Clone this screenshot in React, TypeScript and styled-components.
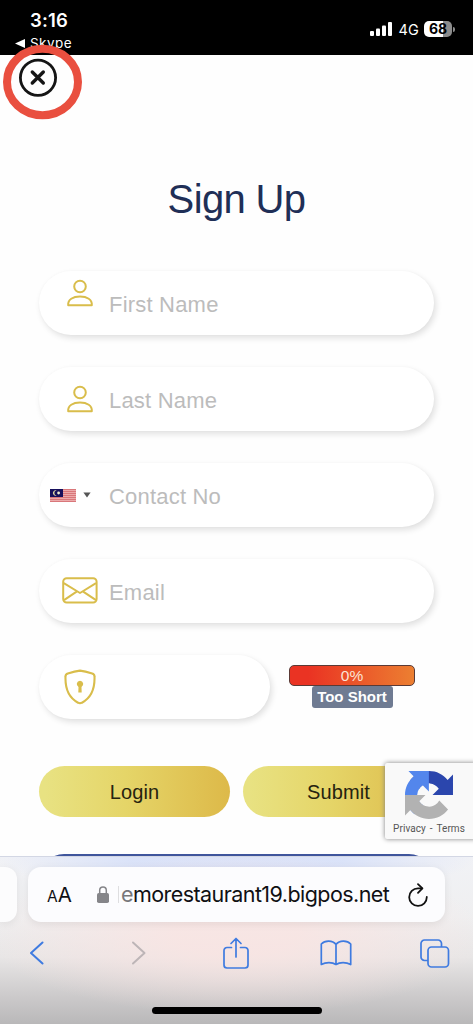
import React from "react";
import styled, { createGlobalStyle } from "styled-components";

const GlobalStyle = createGlobalStyle`
  * { box-sizing: border-box; }
  body { margin: 0; background: #fefefe; }
  button { border: 0; padding: 0; background: none; font: inherit; color: inherit; }
  svg { display: block; flex: none; }
`;

const Screen = styled.div`
  position: relative;
  width: 473px;
  height: 1024px;
  overflow: hidden;
  display: flex;
  flex-direction: column;
  background: #fefefe;
  font-family: "Liberation Sans", Arial, sans-serif;
`;

const StatusBar = styled.header`
  height: 55px;
  flex: none;
  display: flex;
  justify-content: space-between;
  background: #000;
  color: #fff;
  font-family: Inter, sans-serif;
`;

const ClockColumn = styled.div`
  padding: 9px 0 0 15px;
`;

const Clock = styled.div`
  padding-left: 15px;
  font-size: 18.5px;
  line-height: 22px;
  font-weight: 600;
  letter-spacing: 0.15px;
`;

const BackToApp = styled.div`
  display: flex;
  align-items: center;
  gap: 5px;
  margin-top: 4px;
  font-size: 13.5px;
  line-height: 17px;
  letter-spacing: 0.45px;
`;

const Indicators = styled.div`
  display: flex;
  align-items: center;
  height: 22px;
  margin: 18px 18px 0 0;
`;

const Network = styled.span`
  margin: 0 5px 0 6px;
  font-size: 14.5px;
  letter-spacing: 0.2px;
`;

const Battery = styled.span`
  width: 28px;
  height: 16px;
  border-radius: 5px;
  background: linear-gradient(90deg, #fff 68%, #8c8c8c 68%);
  color: #000;
  font-size: 14px;
  line-height: 16px;
  font-weight: 700;
  text-align: center;
`;

const BatteryTip = styled.span`
  width: 2px;
  height: 5px;
  margin-left: 1px;
  border-radius: 0 2px 2px 0;
  background: #8c8c8c;
`;

const CloseButton = styled.button`
  position: absolute;
  left: 18px;
  top: 58px;
`;

const Ring = styled.svg`
  position: absolute;
  left: 2px;
  top: 44px;
`;

const Page = styled.main`
  height: 801px;
  flex: none;
  overflow: hidden;
  padding: 119px 39px 0;
`;

const Title = styled.h1`
  margin: 0 0 47px;
  text-align: center;
  color: #1f2f57;
  font-size: 40px;
  line-height: 50px;
  font-weight: 400;
  letter-spacing: -0.65px;
`;

const Form = styled.form`
  display: flex;
  flex-direction: column;
  gap: 32px;
`;

const Field = styled.label<{ $short?: boolean }>`
  width: ${(p) => (p.$short ? "231px" : "395px")};
  height: 64px;
  display: flex;
  align-items: center;
  border-radius: 32px;
  background: #fff;
  box-shadow: 2px 3px 6px rgba(0, 0, 0, 0.12), 0 0 3px rgba(0, 0, 0, 0.02);
`;

const IconSlot = styled.span<{ $raised?: boolean }>`
  width: 70px;
  height: 64px;
  display: flex;
  align-items: center;
  padding: ${(p) => (p.$raised ? "0 0 21px 12px" : "0 0 1px 12px")};
  justify-content: center;
`;

const CountrySlot = styled.span`
  width: 70px;
  display: flex;
  align-items: center;
  gap: 7px;
  padding-left: 11px;
`;

const Placeholder = styled.span`
  padding-top: 3px;
  color: #bcbcbc;
  font-size: 22px;
  line-height: 28px;
  letter-spacing: 0.2px;
`;

const PasswordRow = styled.div`
  display: flex;
  align-items: flex-start;
`;

const Strength = styled.div`
  width: 126px;
  margin: 10px 0 0 19px;
  display: flex;
  flex-direction: column;
  align-items: center;
`;

const Meter = styled.div`
  width: 100%;
  height: 21px;
  border: 1.5px solid #5b3a36;
  border-radius: 5px;
  background: linear-gradient(90deg, #ea3323 15%, #ec7f31);
  color: #fbe3d6;
  font-size: 15.5px;
  line-height: 19px;
  text-align: center;
`;

const Verdict = styled.div`
  width: 81px;
  height: 22px;
  border-radius: 3px;
  background: #6f7b92;
  color: #fff;
  font-size: 15px;
  line-height: 22px;
  font-weight: 700;
  text-align: center;
`;

const Actions = styled.div`
  display: flex;
  gap: 13px;
  margin-top: 15px;
`;

const GoldButton = styled.button`
  width: 191px;
  height: 51px;
  padding-top: 2px;
  border-radius: 25.5px;
  background: linear-gradient(90deg, #e8e282 3%, #e5d568 45%, #ddb949);
  color: #26230f;
  font-size: 20px;
  letter-spacing: 0.1px;
`;

const NextButton = styled.div`
  height: 50px;
  margin-top: 5px;
  border-radius: 25px;
  background: #3f559c;
`;

const Recaptcha = styled.aside`
  position: absolute;
  left: 385px;
  top: 763px;
  width: 92px;
  height: 76px;
  padding: 8px 4px 0 0;
  display: flex;
  flex-direction: column;
  align-items: center;
  border-radius: 2px;
  background: #f9f9f9;
  box-shadow: 0 0 5px #808080;
`;

const Legal = styled.div`
  margin-top: 3px;
  color: #555;
  font-family: Roboto, sans-serif;
  font-size: 10px;
  line-height: 14px;
  letter-spacing: 0.05px;
  word-spacing: -0.5px;
  white-space: pre;
`;

const Browser = styled.footer`
  height: 168px;
  flex: none;
  border-top: 1px solid #d3d7e4;
  background:
    radial-gradient(ellipse 250px 80px at 50% 78px, rgba(250, 228, 226, 0.8) 25%, rgba(250, 228, 226, 0) 100%),
    radial-gradient(ellipse 240px 42px at 50% 0, rgba(216, 225, 249, 0.9) 45%, rgba(216, 225, 249, 0) 100%),
    linear-gradient(180deg, #f1f2f6 0, #efeff0 60px, #e8e6e6 100px, #c8c6c7 145px, #b9b8b9 100%);
`;

const AddressRow = styled.div`
  display: flex;
  gap: 11px;
  padding-top: 10px;
`;

const PreviousTab = styled.div`
  width: 17px;
  height: 55px;
  border-radius: 0 12px 12px 0;
  background: #fcfcfd;
  box-shadow: 0 2px 8px rgba(0, 0, 0, 0.07);
`;

const AddressBar = styled.div`
  width: 417px;
  height: 55px;
  display: flex;
  align-items: center;
  padding: 0 17px 0 19px;
  border-radius: 13px;
  background: #fcfcfe;
  box-shadow: 0 2px 8px rgba(0, 0, 0, 0.08);
  color: #101013;
  font-family: Inter, sans-serif;
`;

const TextSize = styled.span`
  width: 50px;
  display: flex;
  align-items: baseline;
  font-size: 20.5px;
  small { font-size: 15.5px; }
`;

const Address = styled.span`
  width: 273px;
  margin: 0 17.5px 0 9px;
  padding-left: 2px;
  border-left: 1px solid #dedee0;
  font-size: 21.5px;
  line-height: 17px;
  letter-spacing: -0.56px;
  white-space: nowrap;
  span { color: #77777a; }
`;

const Toolbar = styled.nav`
  height: 36px;
  margin: 13px -12px 0;
  display: grid;
  grid-template-columns: repeat(5, 1fr);
  align-items: center;
  justify-items: center;
`;

const HomeIndicator = styled.div`
  width: 170px;
  height: 7px;
  margin: 36px auto 0;
  border-radius: 4px;
  background: #000;
`;

const gold = "#d9bd4b";

const PersonIcon = () => (
  <svg width="28" height="28" viewBox="0 0 28 28" fill="none" stroke={gold} strokeWidth="2">
    <circle cx="14" cy="7.5" r="5.8" />
    <path d="M2.2 26.2C1.6 20.5 7 17.5 14 17.5S26.4 20.5 25.8 26.2Z" strokeLinejoin="round" />
  </svg>
);

const MailIcon = () => (
  <svg width="36" height="27" viewBox="0 0 36 27" fill="none" stroke={gold} strokeWidth="2" strokeLinejoin="round">
    <rect x="1.2" y="1.2" width="33.4" height="24.4" rx="3.5" />
    <path d="M1.8 6.2 18 16 34 6.2M2 23.2 15 14.3M34 23.2 20.8 14.3" />
  </svg>
);

const ShieldIcon = () => (
  <svg width="32" height="36" viewBox="0 0 32 36">
    <path
      d="M16 1.6C20 2.2 24.5 3.4 28.2 4.5 29.8 5 30.5 5.8 30.5 7.4 31 21 26 29.5 18 33.7 16.6 34.5 15.4 34.5 14 33.7 6 29.5 1 21 1.5 7.4 1.5 5.8 2.2 5 3.8 4.5 7.5 3.4 12 2.2 16 1.6Z"
      fill="none"
      stroke={gold}
      strokeWidth="2.1"
    />
    <path d="M16 11.8a3.3 3.3 0 0 1 1.5 6.2l.2 5.6h-3.4l.2-5.6A3.3 3.3 0 0 1 16 11.8Z" fill={gold} />
  </svg>
);

const FlagIcon = () => (
  <svg width="26" height="13" viewBox="0 0 26 13">
    <rect width="26" height="13" fill="#ecaaab" />
    <path d="M0 .5h26M0 2.5h26M0 4.5h26M0 6.5h26M0 8.5h26M0 10.5h26M0 12.5h26" stroke="#d9777a" strokeWidth="1" />
    <rect width="13" height="8" fill="#17105c" />
    <path d="M7 1.8a2.6 2.6 0 1 0 0 4.3 2.2 2.2 0 1 1 0-4.3Z" fill="#e9e0a8" />
    <circle cx="8.6" cy="4" r="1.4" fill="#f1eed0" />
  </svg>
);

const CaretIcon = () => (
  <svg width="8" height="6" viewBox="0 0 8 6">
    <path d="M.4.4h7.2L4 5.5Z" fill="#555" />
  </svg>
);

const SignalIcon = () => (
  <svg width="22" height="14" viewBox="0 0 22 14" fill="#fff">
    <rect x="0" y="9" width="4" height="5" rx="1" />
    <rect x="6" y="6.4" width="4" height="7.6" rx="1" />
    <rect x="12" y="3.5" width="4" height="10.5" rx="1" />
    <rect x="18" y="0" width="4" height="14" rx="1" />
  </svg>
);

const RecaptchaLogo = () => (
  <svg width="48" height="48" viewBox="0 0 64 64">
    <path fill="#2b46ad" d="M64 31.955l-.033-1.37V4.687l-7.16 7.16C50.948 4.674 42.033.093 32.05.093c-10.4 0-19.622 4.96-25.458 12.64l11.736 11.86a15.55 15.55 0 0 1 4.754-5.334c2.05-1.6 4.952-2.906 8.968-2.906.485 0 .86.057 1.135.163 4.976.393 9.288 3.14 11.828 7.124l-8.307 8.307L64 31.953" />
    <path fill="#5386ec" d="M31.862.094l-1.37.033H4.594l7.16 7.16C4.58 13.147 0 22.06 0 32.046c0 10.4 4.96 19.622 12.64 25.458L24.5 45.768a15.55 15.55 0 0 1-5.334-4.754c-1.6-2.05-2.906-4.952-2.906-8.968 0-.485.057-.86.163-1.135.393-4.976 3.14-9.288 7.124-11.828l8.307 8.307L31.86.095" />
    <path fill="#b2b2b2" d="M.001 32.045l.033 1.37v25.898l7.16-7.16c5.86 7.173 14.774 11.754 24.76 11.754 10.4 0 19.622-4.96 25.458-12.64l-11.736-11.86a15.55 15.55 0 0 1-4.754 5.334c-2.05 1.6-4.952 2.906-8.968 2.906-.485 0-.86-.057-1.135-.163-4.976-.393-9.288-3.14-11.828-7.124l8.307-8.307c-10.522.04-22.4.066-27.295-.005" />
  </svg>
);

interface TextFieldProps {
  label: string;
  slot: React.ReactNode;
}

const TextField = ({ label, slot }: TextFieldProps) => (
  <Field>
    {slot}
    <Placeholder>{label}</Placeholder>
  </Field>
);

export default function App() {
  return (
    <Screen>
      <GlobalStyle />
      <StatusBar>
        <ClockColumn>
          <Clock>3:16</Clock>
          <BackToApp>
            <svg width="10" height="9" viewBox="0 0 10 9"><path d="M0 4.5 10 0v9Z" fill="#fff" /></svg>
            Skype
          </BackToApp>
        </ClockColumn>
        <Indicators>
          <SignalIcon />
          <Network>4G</Network>
          <Battery>68</Battery>
          <BatteryTip />
        </Indicators>
      </StatusBar>

      <Page>
        <Title>Sign Up</Title>
        <Form>
          <TextField label="First Name" slot={<IconSlot $raised><PersonIcon /></IconSlot>} />
          <TextField label="Last Name" slot={<IconSlot><PersonIcon /></IconSlot>} />
          <TextField label="Contact No" slot={<CountrySlot><FlagIcon /><CaretIcon /></CountrySlot>} />
          <TextField label="Email" slot={<IconSlot><MailIcon /></IconSlot>} />
          <PasswordRow>
            <Field $short>
              <IconSlot><ShieldIcon /></IconSlot>
            </Field>
            <Strength>
              <Meter>0%</Meter>
              <Verdict>Too Short</Verdict>
            </Strength>
          </PasswordRow>
          <Actions>
            <GoldButton type="button">Login</GoldButton>
            <GoldButton type="button">Submit</GoldButton>
          </Actions>
          <NextButton />
        </Form>
      </Page>

      <Browser>
        <AddressRow>
          <PreviousTab />
          <AddressBar>
            <TextSize><small>A</small>A</TextSize>
            <svg width="12" height="17" viewBox="0 0 12 17">
              <path d="M2.7 8V4.4a3.3 3.3 0 0 1 6.6 0V8" fill="none" stroke="#858589" strokeWidth="1.5" />
              <rect x="0" y="7" width="12" height="10" rx="1.8" fill="#858589" />
            </svg>
            <Address><span>e</span>morestaurant19.bigpos.net</Address>
            <svg width="20" height="24" viewBox="0 0 20 24" fill="none" stroke="#111" strokeWidth="1.8" strokeLinecap="round" strokeLinejoin="round">
              <path d="M14 5.3H10A8.8 8.8 0 1 0 18.8 14" />
              <path d="M10 1.2 14.4 5.3 10 9.8" />
            </svg>
          </AddressBar>
        </AddressRow>
        <Toolbar>
          <svg width="16" height="24" viewBox="1.5 0 16 24" fill="none" stroke="#3f7be0" strokeWidth="2" strokeLinecap="round" strokeLinejoin="round">
            <path d="M14 1.5 2.5 12 14 22.5" />
          </svg>
          <svg width="20" height="24" viewBox="0 0 20 24" fill="none" stroke="#bdb5b7" strokeWidth="2" strokeLinecap="round" strokeLinejoin="round">
            <path d="M6 1.5 17.5 12 6 22.5" />
          </svg>
          <svg width="26" height="32" viewBox="0 0 26 32" fill="none" stroke="#3f7be0" strokeWidth="1.7" strokeLinecap="round" strokeLinejoin="round">
            <path d="M8.5 10.5H4a3 3 0 0 0-3 3V28a3 3 0 0 0 3 3h18a3 3 0 0 0 3-3V13.5a3 3 0 0 0-3-3h-4.5M13 20V1.5M8 6.5l5-5 5 5" />
          </svg>
          <svg width="32" height="26" viewBox="0 0 32 26" fill="none" stroke="#3f7be0" strokeWidth="1.7" strokeLinejoin="round">
            <path d="M16 4.5C12.5.2 5 .2 1.3 4V24.5c4.5-2.5 11-2.5 14.7 0 3.7-2.5 10.2-2.5 14.7 0V4C27 .2 19.5.2 16 4.5ZM16 4.5v20" />
          </svg>
          <svg width="30" height="29" viewBox="0 0 30 29" fill="none" stroke="#3f7be0" strokeWidth="1.7" strokeLinejoin="round">
            <rect x="8" y="8" width="20.5" height="20" rx="3.5" />
            <path d="M8 21.5H4.5A3.5 3.5 0 0 1 1 18V4.5A3.5 3.5 0 0 1 4.5 1H18a3.5 3.5 0 0 1 3.5 3.5V8" />
          </svg>
        </Toolbar>
        <HomeIndicator />
      </Browser>

      <Recaptcha>
        <RecaptchaLogo />
        <Legal>{"Privacy  -  Terms"}</Legal>
      </Recaptcha>

      <CloseButton type="button" aria-label="Close">
        <svg width="40" height="40" viewBox="0 0 40 40" fill="none" stroke="#151515" strokeLinecap="round">
          <circle cx="20" cy="19.7" r="17.6" strokeWidth="2.8" />
          <path d="M14.3 14 25.3 25M25.3 14 14.3 25" strokeWidth="3.4" />
        </svg>
      </CloseButton>
      <Ring width="82" height="76" viewBox="0 0 82 76">
        <ellipse cx="40.5" cy="38" rx="35.5" ry="33.2" fill="none" stroke="#e94f3f" strokeWidth="8" />
      </Ring>
    </Screen>
  );
}
